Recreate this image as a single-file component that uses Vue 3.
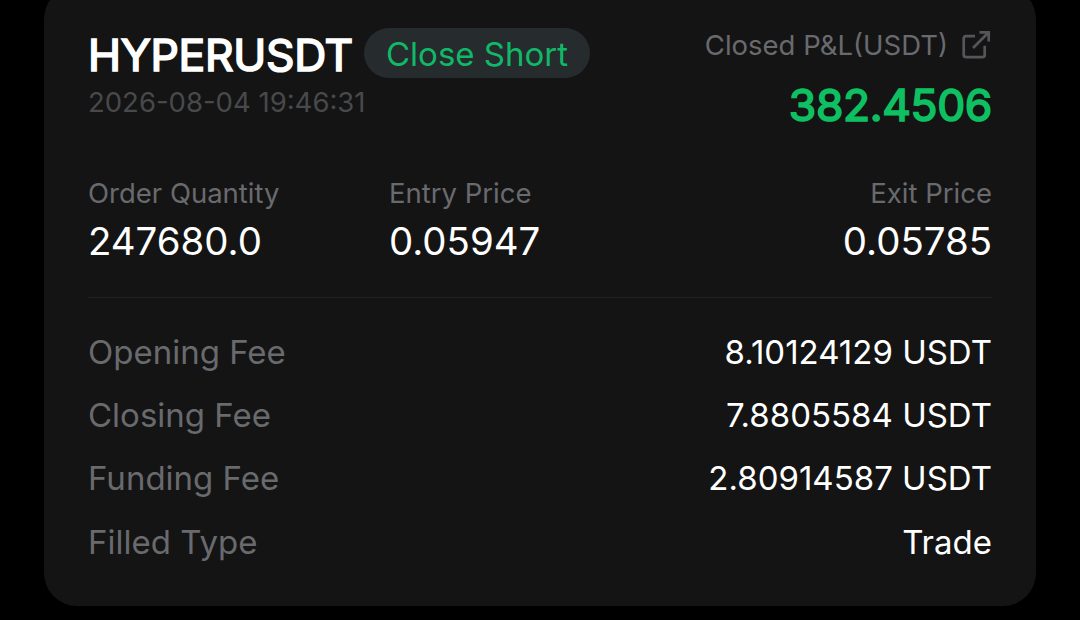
<template>
  <div class="page">
    <section class="card">
      <header class="header">
        <div class="position">
          <div class="pair">
            <h1>{{ order.symbol }}</h1>
            <span class="badge">{{ order.side }}</span>
          </div>
          <p class="date">{{ order.date }}</p>
        </div>
        <div class="pnl">
          <p class="pnl-label">
            <span>Closed P&amp;L(USDT)</span>
            <svg class="share" viewBox="0 0 30 30" fill="none" stroke="currentColor" stroke-width="2.7">
              <path d="M14 6.2H5.2a2.5 2.5 0 0 0-2.5 2.5v16a2.5 2.5 0 0 0 2.5 2.5h16a2.5 2.5 0 0 0 2.5-2.5v-9" />
              <path d="M12 18 27.5 2.5M18.5 2.3h9.2v9.2" />
            </svg>
          </p>
          <p class="pnl-value">{{ order.pnl }}</p>
        </div>
      </header>

      <div class="prices">
        <div v-for="item in prices" :key="item.label" class="price">
          <p class="price-label">{{ item.label }}</p>
          <p class="price-value">{{ item.value }}</p>
        </div>
      </div>

      <dl class="fees">
        <div v-for="fee in fees" :key="fee.label" class="fee">
          <dt>{{ fee.label }}</dt>
          <dd>{{ fee.value }}</dd>
        </div>
      </dl>
    </section>
  </div>
</template>

<script setup>
const order = {
  symbol: 'HYPERUSDT',
  side: 'Close Short',
  date: '2026-08-04 19:46:31',
  pnl: '382.4506'
}

const prices = [
  { label: 'Order Quantity', value: '247680.0' },
  { label: 'Entry Price', value: '0.05947' },
  { label: 'Exit Price', value: '0.05785' }
]

const fees = [
  { label: 'Opening Fee', value: '8.10124129 USDT' },
  { label: 'Closing Fee', value: '7.8805584 USDT' },
  { label: 'Funding Fee', value: '2.80914587 USDT' },
  { label: 'Filled Type', value: 'Trade' }
]
</script>

<style>
body {
  background-color: #000;
}
</style>

<style scoped>
.page {
  display: flex;
  align-items: flex-end;
  height: 620px;
  padding: 0 44px 14px;
  box-sizing: border-box;
  overflow: hidden;
  background-color: #000;
  font-family: Inter, "Liberation Sans", sans-serif;
}
h1,
p,
dl,
dd {
  margin: 0;
  padding: 0;
}
.card {
  flex: none;
  width: 992px;
  height: 620px;
  padding: 42px 44px 0;
  box-sizing: border-box;
  border-radius: 33px;
  background-color: #141414;
  color: #fff;
}
.header {
  display: flex;
  justify-content: space-between;
  height: 137px;
}
.pair {
  display: flex;
  align-items: center;
  height: 50px;
}
h1 {
  width: 276px;
  padding-top: 3px;
  font-size: 44.4px;
  font-weight: 400;
  line-height: 50px;
  letter-spacing: -0.3px;
  -webkit-text-stroke: 1.7px currentColor;
}
.badge {
  height: 50px;
  padding: 0 22px;
  border-radius: 25px;
  background-color: #262b2d;
  color: #10b868;
  font-size: 33px;
  line-height: 53px;
}
.date {
  margin-top: 6px;
  color: #48494b;
  font-size: 27.5px;
  line-height: 36px;
}
.pnl {
  text-align: right;
}
.pnl-label {
  display: flex;
  align-items: center;
  justify-content: flex-end;
  gap: 13px;
  height: 34px;
  color: #696a6e;
  font-size: 27.5px;
  line-height: 34px;
}
.share {
  width: 30px;
  height: 30px;
  margin-right: 1px;
  color: #55565a;
}
.pnl-value {
  margin-top: 15px;
  color: #0fc062;
  font-size: 44.4px;
  line-height: 56px;
  letter-spacing: -0.35px;
  -webkit-text-stroke: 1.7px currentColor;
}
.prices {
  display: grid;
  grid-template-columns: 301px 1fr 1fr;
  height: 132px;
  border-bottom: 1px solid #222223;
}
.price:last-child {
  text-align: right;
}
.price-label {
  padding-top: 11px;
  color: #696a6e;
  font-size: 27.5px;
  line-height: 34px;
}
.price-value {
  margin-top: 7px;
  font-size: 38.4px;
  line-height: 48px;
}
.fees {
  padding-top: 23px;
}
.fee {
  display: flex;
  justify-content: space-between;
  height: 63.2px;
  font-size: 33px;
  line-height: 63.2px;
}
dt {
  color: #696a6e;
}
</style>
